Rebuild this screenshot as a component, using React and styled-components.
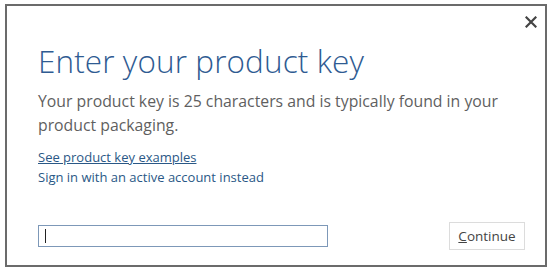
import React from 'react'
import styled, { createGlobalStyle } from 'styled-components'

const GlobalStyle = createGlobalStyle`
  html, body {
    margin: 0;
    padding: 0;
    background: #fff;
  }
  body {
    font-family: "Open Sans", "Noto Sans", sans-serif;
  }
`

function App() {
  return (
    <>
      <GlobalStyle />
      <Page>
        <Dialog>
          <CloseButton aria-label="Close">
            <svg width="12" height="12" viewBox="0 0 12 12">
              <path d="M1.5 1.5 L10.5 10.5 M10.5 1.5 L1.5 10.5" stroke="#444" strokeWidth="2.2" strokeLinecap="square" />
            </svg>
          </CloseButton>
          <Title>Enter your product key</Title>
          <Description>
            Your product key is 25 characters and is typically found in your product packaging.
          </Description>
          <Links>
            <Link href="#" underline>See product key examples</Link>
            <Link href="#">Sign in with an active account instead</Link>
          </Links>
          <Footer>
            <KeyInput>
              <Caret />
            </KeyInput>
            <ContinueButton>
              <u>C</u>ontinue
            </ContinueButton>
          </Footer>
        </Dialog>
      </Page>
    </>
  )
}

export default App

const Page = styled.div`
  width: 550px;
  height: 269px;
  padding: 4px 0 0 5px;
  box-sizing: border-box;
`
const Dialog = styled.div`
  position: relative;
  width: 542px;
  height: 263px;
  box-sizing: border-box;
  border: 2px solid #6b6b6b;
  padding: 35px 20px 0 31px;
  display: flex;
  flex-direction: column;
`
const CloseButton = styled.div`
  position: absolute;
  top: 10px;
  right: 8px;
  width: 12px;
  height: 12px;
  display: flex;
`
const Title = styled.h1`
  margin: 0;
  font-size: 31.5px;
  font-weight: 300;
  color: #2f5b92;
  line-height: 40px;
  letter-spacing: 0.1px;
`
const Description = styled.p`
  margin: 8px 0 0;
  font-size: 15.8px;
  line-height: 24px;
  color: #5f5f5f;
  max-width: 480px;
`
const Links = styled.div`
  margin-top: 10px;
  display: flex;
  flex-direction: column;
`
const Link = styled.a`
  font-size: 13px;
  line-height: 20px;
  color: #2a5886;
  text-decoration: ${p => (p.underline ? 'underline' : 'none')};
  align-self: flex-start;
`
const Footer = styled.div`
  margin-top: auto;
  margin-bottom: 15px;
  display: flex;
  align-items: center;
  justify-content: space-between;
`
const KeyInput = styled.div`
  width: 290px;
  height: 22px;
  box-sizing: border-box;
  border: 1px solid #7d98b8;
  display: flex;
  align-items: center;
  padding-left: 6px;
`
const Caret = styled.span`
  width: 1px;
  height: 14px;
  background: #222;
`
const ContinueButton = styled.button`
  width: 76px;
  height: 28px;
  border: 1px solid #dcdcdc;
  background: #fff;
  font-family: "Open Sans", "Noto Sans", sans-serif;
  font-size: 13.5px;
  color: #444;
  padding: 0;
  u {
    text-decoration-thickness: 1px;
  }
`
